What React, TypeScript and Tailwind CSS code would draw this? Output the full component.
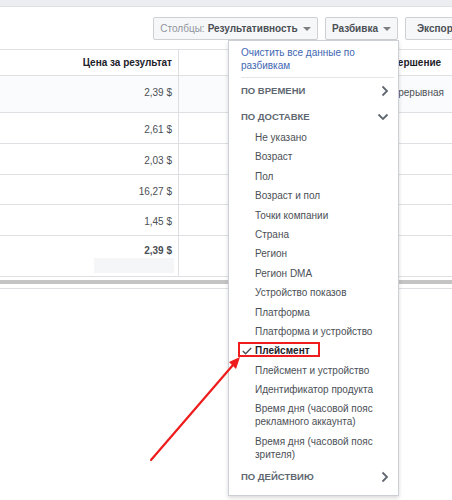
import React from 'react';

const font = { fontFamily: '"Liberation Sans", Arial, sans-serif' };

const rows = [
  { price: '2,39 $', end: 'Непрерывная', h: 'h-[37px]', bg: 'bg-[#fafbfc]' },
  { price: '2,61 $', end: '', h: 'h-[31px]', bg: '' },
  { price: '2,03 $', end: '', h: 'h-[31px]', bg: '' },
  { price: '16,27 $', end: '', h: 'h-[30px]', bg: '' },
  { price: '1,45 $', end: '', h: 'h-[31px]', bg: '' },
];

const deliveryItems = [
  'Не указано',
  'Возраст',
  'Пол',
  'Возраст и пол',
  'Точки компании',
  'Страна',
  'Регион',
  'Регион DMA',
  'Устройство показов',
  'Платформа',
  'Платформа и устройство',
];

const afterItems = [
  'Плейсмент и устройство',
  'Идентификатор продукта',
];

function Caret() {
  return <span className="ml-[5px] inline-block w-0 h-0 border-l-[4px] border-r-[4px] border-t-[4px] border-l-transparent border-r-transparent border-t-[#7f7f7f] align-middle" />;
}

function ChevronRight() {
  return (
    <svg width="8" height="12" viewBox="0 0 8 12">
      <polyline points="1.5,1.5 6,6 1.5,10.5" fill="none" stroke="#606770" strokeWidth="1.8" />
    </svg>
  );
}

function ChevronDown() {
  return (
    <svg width="12" height="8" viewBox="0 0 12 8">
      <polyline points="1.5,1.5 6,6 10.5,1.5" fill="none" stroke="#606770" strokeWidth="1.8" />
    </svg>
  );
}

function Section({ label, open }: { label: string; open?: boolean }) {
  return (
    <div className="flex items-center justify-between h-[26px] pr-[5px] text-[9.5px] font-bold text-[#606770]">
      <span>{label}</span>
      {open ? <ChevronDown /> : <ChevronRight />}
    </div>
  );
}

function Item({ children }: { children: React.ReactNode }) {
  return <div className="pl-[14px] h-[19.4px] leading-[19.4px] text-[10px] text-[#4b4f56] whitespace-nowrap">{children}</div>;
}

function Breakdown() {
  return (
    <div className="absolute left-[228px] top-[40px] w-[171px] h-[456px] bg-white border border-[#ccd0d5] shadow-[0_2px_4px_rgba(0,0,0,0.15)] pl-[12px] pr-[4px] pt-[5px]">
      <div className="text-[10px] leading-[12.5px] text-[#4267b2] pt-[1px] pb-[5px] border-b border-[#e5e5e5]">
        Очистить все данные по<br />разбивкам
      </div>
      <div>
        <Section label="ПО ВРЕМЕНИ" />
        <Section label="ПО ДОСТАВКЕ" open />
        <div className="-mt-[2px]">
          {deliveryItems.map((t) => (
            <Item key={t}>{t}</Item>
          ))}
          <div className="relative flex items-center h-[19.4px] text-[10px] font-bold text-[#1d2129]">
            <svg className="absolute left-[1px] top-[6px]" width="10" height="8" viewBox="0 0 10 8">
              <polyline points="0.8,4 3.6,6.8 9.2,1" fill="none" stroke="#4b4f56" strokeWidth="1.4" />
            </svg>
            <span className="pl-[14px]">Плейсмент</span>
            <div className="absolute left-[-3px] top-[1px] w-[82px] h-[15px] border-2 border-[#ee1c1c]" />
          </div>
          {afterItems.map((t) => (
            <Item key={t}>{t}</Item>
          ))}
          <div className="pl-[14px] pt-[3px] text-[10px] leading-[13px] text-[#4b4f56]">
            Время дня (часовой пояс<br />рекламного аккаунта)
          </div>
          <div className="pl-[14px] pt-[7px] text-[10px] leading-[13px] text-[#4b4f56]">
            Время дня (часовой пояс<br />зрителя)
          </div>
        </div>
        <div className="mt-[3px]">
          <Section label="ПО ДЕЙСТВИЮ" />
        </div>
      </div>
    </div>
  );
}

export default function App() {
  return (
    <div className="relative w-[452px] h-[500px] bg-white overflow-hidden" style={font}>
      <div className="h-[7px] bg-[#eceef1] border-b border-[#dddfe2]" />

      <div className="flex justify-end gap-[7px] mt-[10px] -mr-[40px]">
        <button className="h-[23px] w-[165px] flex items-center justify-center bg-[#f6f7f9] border border-[#ced0d4] rounded-[2px] text-[10px] font-bold text-[#4b4f56]">
          <span className="font-normal text-[#90949c] mr-[3px]">Столбцы:</span>Результативность<Caret />
        </button>
        <button className="h-[23px] w-[73px] flex items-center justify-center bg-[#f6f7f9] border border-[#ced0d4] rounded-[2px] text-[10px] font-bold text-[#4b4f56]">
          Разбивка<Caret />
        </button>
        <button className="h-[23px] w-[87px] pl-[11px] flex items-center bg-[#f6f7f9] border border-[#ced0d4] rounded-[2px] text-[10px] font-bold text-[#4b4f56]">
          Экспорт
        </button>
      </div>

      <div className="mt-[9px] border-t border-[#dddfe2]">
        <div className="grid grid-cols-[179px_191px_1fr] h-[26px] border-b border-[#dddfe2] text-[10px] font-bold text-[#1d2129]">
          <div className="border-r border-[#dddfe2] flex items-center justify-end pr-[6px]">Цена за результат</div>
          <div className="border-r border-[#dddfe2]" />
          <div className="flex items-center pl-[10px]">Завершение</div>
        </div>
        {rows.map((r, i) => (
          <div key={i} className={`grid grid-cols-[179px_191px_1fr] border-b border-[#dddfe2] text-[10px] text-[#4b4f56] ${r.h} ${r.bg}`}>
            <div className="border-r border-[#dddfe2] text-right pr-[6px] pt-[9px]">{r.price}</div>
            <div className="border-r border-[#dddfe2]" />
            <div className="pl-[10px] pt-[9px]">{r.end}</div>
          </div>
        ))}
        <div className="grid grid-cols-[179px_191px_1fr] h-[41px] border-b border-[#dddfe2] text-[10px]">
          <div className="border-r border-[#dddfe2] flex flex-col items-end pr-[6px] pt-[7px]">
            <span className="font-bold text-[#4b4f56]">2,39 $</span>
            <div className="mt-[0px] -mr-[2px] w-[80px] h-[15px] bg-[#f5f6f7]" />
          </div>
          <div className="border-r border-[#dddfe2]" />
          <div />
        </div>
        <div className="mt-[3px] h-[4px] bg-[#c4c4c4]" />
        <div className="mt-[4px] border-t border-[#dddfe2]" />
      </div>

      <Breakdown />

      <svg className="absolute left-0 top-0 pointer-events-none" width="452" height="500" viewBox="0 0 452 500">
        <line x1="151" y1="460" x2="233" y2="365" stroke="#ee1c1c" strokeWidth="2.2" strokeLinecap="round" />
        <polygon points="240,357 229,362 236,369" fill="#ee1c1c" />
      </svg>
    </div>
  );
}
